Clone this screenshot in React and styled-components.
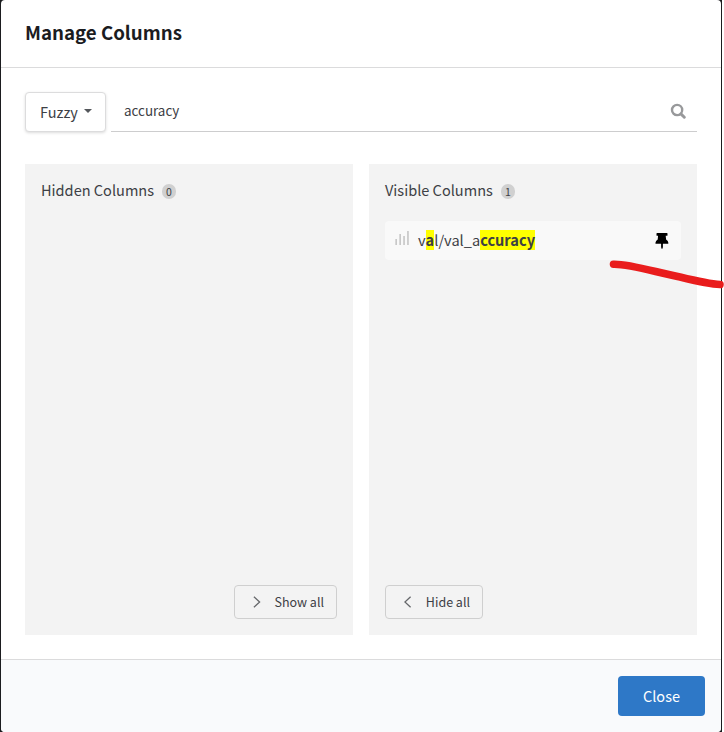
import React from "react";
import styled, { createGlobalStyle } from "styled-components";

const GlobalStyle = createGlobalStyle`
  * { box-sizing: border-box; }
  body {
    margin: 0;
    background: #fff;
    color: #3d4045;
    font-family: "Noto Sans CJK SC", "Noto Sans", sans-serif;
  }
  button, input { font-family: inherit; color: inherit; margin: 0; }
`;

const Backdrop = styled.div`
  position: relative;
  width: 722px;
  height: 732px;
  padding: 0 1px;
  background: #1b1c1f;
`;

const Modal = styled.section`
  display: flex;
  flex-direction: column;
  height: 732px;
  background: #fff;
  border-radius: 4px;
  overflow: hidden;
`;

const Header = styled.header`
  height: 68px;
  padding: 18px 24px 0;
  border-bottom: 1px solid #dbdbdc;
`;

const Title = styled.h1`
  margin: 0;
  font-size: 18.7px;
  line-height: 28px;
  font-weight: 700;
  color: #1b1c1f;
  white-space: nowrap;
`;

const Content = styled.div`
  flex: 1;
  padding: 24px 24px 0;
`;

const SearchRow = styled.div`
  display: flex;
  gap: 5px;
  height: 40px;
`;

const ModeButton = styled.button`
  display: flex;
  align-items: center;
  gap: 6px;
  width: 81px;
  height: 40px;
  padding: 0 0 0 14px;
  border: 1px solid #dcdcdd;
  border-radius: 4px;
  background: #fff;
  box-shadow: 0 1px 3px rgba(0, 0, 0, 0.14);
  font-size: 14.5px;
  line-height: 20px;
`;

const Caret = styled.span`
  border: 4px solid transparent;
  border-top-color: #54575b;
  border-bottom: 0;
  margin-top: -3px;
`;

const SearchField = styled.label`
  flex: 1;
  display: flex;
  align-items: center;
  padding: 0 11px 2px 13px;
  border-bottom: 1px solid #cdcdce;
`;

const SearchInput = styled.input`
  flex: 1;
  padding: 0;
  border: 0;
  outline: 0;
  background: transparent;
  font-size: 13.4px;
  line-height: 20px;
  height: 20px;
  margin-bottom: 2px;
`;

const Columns = styled.div`
  display: grid;
  grid-template-columns: 1fr 1fr;
  gap: 16px;
  margin-top: 32px;
`;

const Panel = styled.section`
  display: flex;
  flex-direction: column;
  height: 471px;
  padding: 15px 16px 16px;
  background: #f3f3f3;
`;

const PanelHeading = styled.h2`
  display: flex;
  align-items: center;
  gap: 8px;
  height: 22px;
  margin: 0;
  font-size: 14.55px;
  line-height: 22px;
  font-weight: 400;
`;

const Count = styled.span`
  width: 14px;
  height: 15px;
  margin-top: 2px;
  border-radius: 8px;
  background: #d0d0d0;
  font-size: 10.5px;
  line-height: 15px;
  text-align: center;
`;

const ColumnItem = styled.div`
  display: flex;
  align-items: center;
  height: 39px;
  margin-top: 20px;
  padding: 0 12px 0 10px;
  border-radius: 4px;
  background: #f9f9f9;
`;

const ColumnName = styled.span`
  display: flex;
  flex: 1;
  margin: 0 0 1px 9px;
  font-size: 14.6px;
  line-height: 20px;
`;

const Match = styled.mark`
  background: #ff0;
  color: inherit;
  font-weight: 700;
`;

const MoveButton = styled.button`
  display: flex;
  align-items: center;
  justify-content: space-between;
  align-self: ${(p) => (p.$end ? "flex-end" : "flex-start")};
  width: ${(p) => p.$width}px;
  height: 34px;
  margin-top: auto;
  padding: 0 12px 0 18px;
  border: 1px solid #cfcfcf;
  border-radius: 4px;
  background: transparent;
  font-size: 12.5px;
  line-height: 18px;
`;

const Footer = styled.footer`
  display: flex;
  justify-content: flex-end;
  height: 73px;
  padding: 16px;
  border-top: 1px solid #dbdbdc;
  background: #f9fafc;
`;

const CloseButton = styled.button`
  width: 87px;
  height: 40px;
  padding: 0;
  border: 0;
  border-radius: 4px;
  background: #2e78c7;
  color: #fff;
  font-size: 14.5px;
  line-height: 20px;
`;

const PenStroke = styled.svg`
  position: absolute;
  left: 600px;
  top: 250px;
`;

const SearchIcon = () => (
  <svg width="16" height="16" viewBox="0 0 16 16" fill="none" stroke="#98999b">
    <circle cx="7.1" cy="7" r="5.1" strokeWidth="2.4" />
    <path d="M10.9 10.9 14.3 14.3" strokeWidth="2.9" strokeLinecap="round" />
  </svg>
);

const BarsSvg = styled.svg`
  margin-bottom: 6px;
`;

const BarsIcon = () => (
  <BarsSvg width="14" height="16" viewBox="0 0 14 16" fill="#c2c2c2">
    <path d="M.4 9h1.5v6H.4zM4.4 4h1.5v11H4.4zM8.3 6h1.5v9H8.3zM12.2 1h1.5v14h-1.5z" />
  </BarsSvg>
);

const PinIcon = () => (
  <svg width="14" height="16" viewBox="0 0 14 16" fill="#000">
    <path d="M2.1 0h9.8q.6 0 .6.6v1.6q0 .6-.6.6h-1.2l.4 3.7q2.1 1.1 2.3 3.4 0 .9-.7.9H1.1q-.7 0-.7-.9.2-2.3 2.3-3.4l.4-3.7H2.1q-.6 0-.6-.6V.6q0-.6.6-.6zM6.1 10.8h1.8v3.5L7.2 16h-.4l-.7-1.7z" />
  </svg>
);

const Chevron = ({ left }) => (
  <svg width="8" height="12" viewBox="0 0 8 12" fill="none" stroke="#66686b" strokeWidth="1.3">
    <path d={left ? "M6.6 .7 .9 6 6.6 11.3" : "M.9 .7 6.6 6 .9 11.3"} />
  </svg>
);

export default function App() {
  return (
    <>
      <GlobalStyle />
      <Backdrop>
        <Modal role="dialog" aria-label="Manage Columns">
          <Header>
            <Title>Manage Columns</Title>
          </Header>
          <Content>
            <SearchRow>
              <ModeButton>
                Fuzzy
                <Caret />
              </ModeButton>
              <SearchField>
                <SearchInput aria-label="Search columns" defaultValue="accuracy" />
                <SearchIcon />
              </SearchField>
            </SearchRow>
            <Columns>
              <Panel>
                <PanelHeading>
                  Hidden Columns <Count>0</Count>
                </PanelHeading>
                <MoveButton $end $width={103}>
                  <Chevron />
                  Show all
                </MoveButton>
              </Panel>
              <Panel>
                <PanelHeading>
                  Visible Columns <Count>1</Count>
                </PanelHeading>
                <ColumnItem>
                  <BarsIcon />
                  <ColumnName>
                    v<Match>a</Match>l/val_a<Match>ccuracy</Match>
                  </ColumnName>
                  <PinIcon />
                </ColumnItem>
                <MoveButton $width={98}>
                  <Chevron left />
                  Hide all
                </MoveButton>
              </Panel>
            </Columns>
          </Content>
          <Footer>
            <CloseButton>Close</CloseButton>
          </Footer>
        </Modal>
        <PenStroke width="124" height="45" viewBox="0 0 124 45" fill="none">
          <path
            d="M13.5 14.2C30 13.8 55 22 80 27Q109 34 120 34.5"
            stroke="#e91c1c"
            strokeWidth="7.6"
            strokeLinecap="round"
          />
        </PenStroke>
      </Backdrop>
    </>
  );
}
